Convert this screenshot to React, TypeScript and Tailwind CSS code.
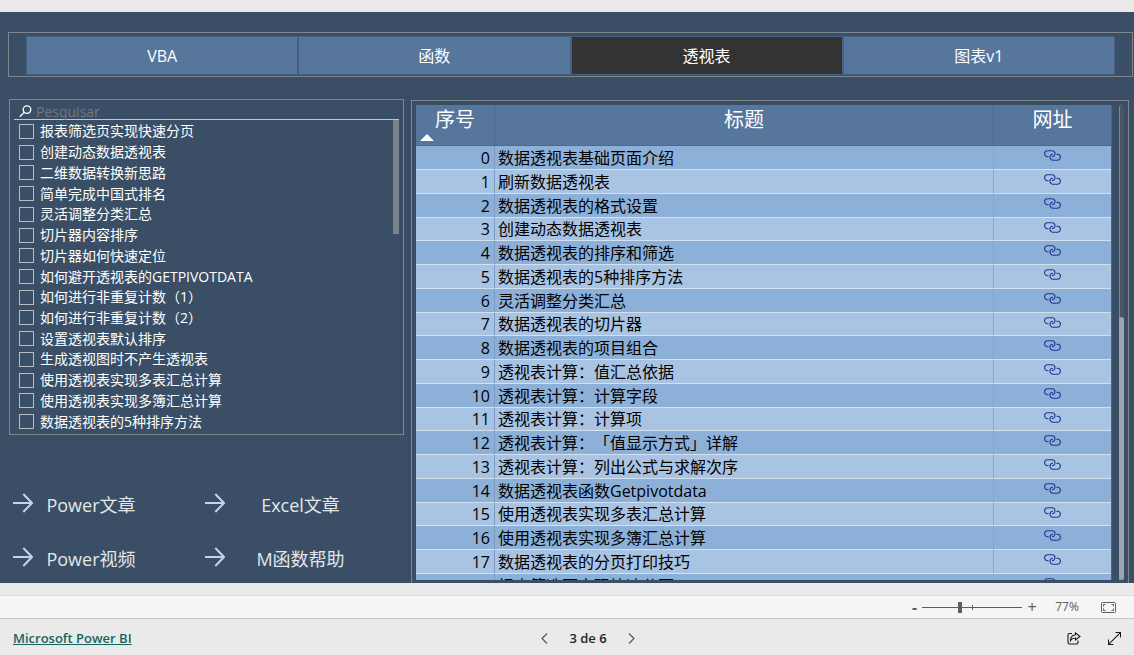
import { useState } from 'react';
import clsx from 'clsx';

const TABS = ['VBA', '函数', '透视表', '图表v1'];

const SLICER_ITEMS = [
  '报表筛选页实现快速分页',
  '创建动态数据透视表',
  '二维数据转换新思路',
  '简单完成中国式排名',
  '灵活调整分类汇总',
  '切片器内容排序',
  '切片器如何快速定位',
  '如何避开透视表的GETPIVOTDATA',
  '如何进行非重复计数（1）',
  '如何进行非重复计数（2）',
  '设置透视表默认排序',
  '生成透视图时不产生透视表',
  '使用透视表实现多表汇总计算',
  '使用透视表实现多簿汇总计算',
  '数据透视表的5种排序方法',
];

const ARTICLES = [
  '数据透视表基础页面介绍',
  '刷新数据透视表',
  '数据透视表的格式设置',
  '创建动态数据透视表',
  '数据透视表的排序和筛选',
  '数据透视表的5种排序方法',
  '灵活调整分类汇总',
  '数据透视表的切片器',
  '数据透视表的项目组合',
  '透视表计算：值汇总依据',
  '透视表计算：计算字段',
  '透视表计算：计算项',
  '透视表计算：「值显示方式」详解',
  '透视表计算：列出公式与求解次序',
  '数据透视表函数Getpivotdata',
  '使用透视表实现多表汇总计算',
  '使用透视表实现多簿汇总计算',
  '数据透视表的分页打印技巧',
  '报表筛选页实现快速分页',
];

const LINKS = ['Power文章', 'Excel文章', 'Power视频', 'M函数帮助'];

function ArrowIcon() {
  return (
    <svg width="20" height="20" viewBox="0 0 20 20" fill="none" stroke="#c3d5ea" strokeWidth="2">
      <path d="M0 10H18.6M10.3 1L19 10L10.3 19" />
    </svg>
  );
}

function LinkIcon() {
  return (
    <svg width="17" height="11" viewBox="0 0 17 11" fill="none" stroke="#1f3491" strokeWidth="1.1">
      <path d="M4.6 6.8H3.6A3 3 0 0 1 3.6 0.8H8A3 3 0 0 1 8 6.8" />
      <path d="M12.4 4.2H13.4A3 3 0 0 1 13.4 10.2H9A3 3 0 0 1 9 4.2" />
    </svg>
  );
}

function TabBar() {
  const [active, setActive] = useState('透视表');

  return (
    <nav className="mr-px ml-2 flex h-[45px] border border-[#80868e] px-[17px] pt-[3px] pb-px">
      {TABS.map((tab) => (
        <button
          key={tab}
          type="button"
          onClick={() => setActive(tab)}
          className={clsx(
            'flex-1 border border-[#446082] text-base text-white',
            tab === active ? 'bg-[#333333]' : 'bg-[#56769c]',
          )}
        >
          {tab}
        </button>
      ))}
    </nav>
  );
}

function Slicer() {
  return (
    <section className="relative flex h-[336px] flex-col border border-[#80868e] px-1 pt-1">
      <label className="flex h-4 items-center gap-1 border-b border-[#c0c6ce] pl-[5px]">
        <svg width="13" height="13" viewBox="0 0 13 13" fill="none" stroke="#fff" strokeWidth="1.3">
          <circle cx="8" cy="4.6" r="3.8" />
          <path d="M5.2 7.4L0.8 11.8" />
        </svg>
        <input
          type="text"
          aria-label="Pesquisar"
          placeholder="Pesquisar"
          className="h-4 min-w-0 flex-1 text-sm leading-4 text-white outline-none placeholder:text-[#74777b]"
        />
      </label>
      <ul className="mb-[2px] flex flex-1 flex-col pt-px">
        {SLICER_ITEMS.map((item) => (
          <li key={item} className="min-h-0 flex-1">
            <label className="flex h-full items-center gap-1.5 pl-[5px] text-sm leading-5 text-white">
              <input
                type="checkbox"
                className="size-[15px] shrink-0 appearance-none border border-[#b9bcc2] checked:bg-white"
              />
              {item}
            </label>
          </li>
        ))}
      </ul>
      <div className="absolute top-5 right-1 h-[114px] w-1.5 bg-[#7b838f]" />
    </section>
  );
}

function ArticleTable() {
  return (
    <section className="mt-px mr-[5px] flex min-w-0 flex-1 gap-[7px] overflow-hidden border border-b-0 border-[#80868e] p-1 pb-[3px]">
      <div className="min-w-0 flex-1 overflow-hidden border-r border-[#4a6484]">
        <table className="w-full table-fixed border-separate border-spacing-0 text-base leading-5 text-black">
          <colgroup>
            <col className="w-[79px]" />
            <col />
            <col className="w-[117px]" />
          </colgroup>
          <thead>
            <tr className="h-[41px] bg-[#56769c] align-top text-xl leading-7 text-white [&>th]:border-[#4c6a90] [&>th]:p-0 [&>th]:pt-px [&>th]:font-normal">
              <th className="relative border-r border-b">
                序号
                <svg className="absolute bottom-1 left-1" width="14" height="7" viewBox="0 0 14 7">
                  <path d="M0 7L7 0L14 7Z" fill="#fff" />
                </svg>
              </th>
              <th className="border-r border-b">标题</th>
              <th className="border-b">网址</th>
            </tr>
          </thead>
          <tbody>
            {ARTICLES.map((title, i) => (
              <tr
                key={title}
                className="h-6 odd:bg-[#8db0d8] even:bg-[#a9c4e3] [&:nth-child(4n)]:h-[23px] [&>td]:border-b [&>td]:border-b-[#d3e0ef] [&>td]:py-0"
              >
                <td className="border-r border-r-[#7c9cc4] pr-1 text-right">{i}</td>
                <td className="truncate border-r border-r-[#8aa8cc] pl-[3px] [text-spacing-trim:space-all]">
                  {title}
                </td>
                <td>
                  <a href="#" aria-label={title} className="flex justify-center pb-1">
                    <LinkIcon />
                  </a>
                </td>
              </tr>
            ))}
          </tbody>
        </table>
      </div>
      <div className="flex w-[5px] flex-col rounded-t-sm border-l border-[#80868e] bg-[#4d5662]">
        <div className="flex-[45]" />
        <div className="-ml-px flex-[56] rounded-full bg-[#9ca3b1]" />
      </div>
    </section>
  );
}

function QuickLinks() {
  return (
    <div className="mt-[41px] grid grid-cols-[192px_1fr] pl-1">
      {LINKS.map((label) => (
        <a
          key={label}
          href="#"
          className="flex h-[54px] items-center text-lg text-[#e4e6e8] odd:pr-14 even:pr-7"
        >
          <ArrowIcon />
          <span className="flex-1 pt-1 text-center">{label}</span>
        </a>
      ))}
    </div>
  );
}

function ZoomBar() {
  return (
    <div className="flex h-6 items-center justify-end border-y border-t-[#dcdcdc] border-b-[#c8c8c8] bg-[#f5f5f5] pr-[18px] text-[#605e5c]">
      <button type="button" aria-label="-" className="w-[10px] text-left text-base leading-5 font-bold">
        -
      </button>
      <div className="relative flex">
        <input
          type="range"
          aria-label="77%"
          defaultValue={38}
          className="h-[11px] w-[100px] appearance-none bg-[linear-gradient(#605e5c,#605e5c)] bg-[length:100%_1px] bg-center bg-no-repeat [&::-webkit-slider-thumb]:h-[11px] [&::-webkit-slider-thumb]:w-1 [&::-webkit-slider-thumb]:appearance-none [&::-webkit-slider-thumb]:bg-[#605e5c]"
        />
        <span className="pointer-events-none absolute top-[3px] left-1/2 h-[5px] w-px bg-[#605e5c]" />
      </div>
      <button type="button" aria-label="+" className="w-5 text-center text-base leading-5">
        +
      </button>
      <span className="w-[50px] text-center text-xs">77%</span>
      <button type="button" aria-label="Ajustar" className="ml-[9px]">
        <svg width="15" height="11" viewBox="0 0 15 11" fill="none" stroke="#605e5c">
          <rect x="0.5" y="0.5" width="14" height="10" rx="1" />
          <path d="M2.5 4.5V2.5H4.5M10.5 2.5H12.5V4.5M12.5 6.5V8.5H10.5M4.5 8.5H2.5V6.5" />
        </svg>
      </button>
    </div>
  );
}

function Footer() {
  return (
    <footer className="grid h-9 grid-cols-[1fr_auto_1fr] items-center bg-[#eaeaea] px-[13px] pt-[3px] text-[13px] font-semibold">
      <a href="#" className="justify-self-start text-[#17655c] underline">
        Microsoft Power BI
      </a>
      <div className="flex items-center gap-[21px] pl-[42px] text-[#252423]">
        <button type="button" aria-label="Anterior">
          <svg width="7" height="11" viewBox="0 0 7 11" fill="none" stroke="#44605c" strokeWidth="1.2">
            <path d="M6 0.5L1 5.5L6 10.5" />
          </svg>
        </button>
        <span>3 de 6</span>
        <button type="button" aria-label="Seguinte">
          <svg width="7" height="11" viewBox="0 0 7 11" fill="none" stroke="#44605c" strokeWidth="1.2">
            <path d="M1 0.5L6 5.5L1 10.5" />
          </svg>
        </button>
      </div>
      <div className="flex items-center gap-[27px] justify-self-end">
        <button type="button" aria-label="Compartilhar">
          <svg width="14" height="13" viewBox="0 0 14 13" fill="none" stroke="#1b1a19" strokeWidth="1.1">
            <path d="M5 1.5H2.5A1.5 1.5 0 0 0 1 3V10.5A1.5 1.5 0 0 0 2.5 12H9.5A1.5 1.5 0 0 0 11 10.5V8.5" />
            <path d="M8.5 0.8L13 4.5L8.5 8V6C6 6 4.6 6.8 3.5 8.5C3.7 5.3 5.3 3 8.5 2.8Z" />
          </svg>
        </button>
        <button type="button" aria-label="Tela inteira">
          <svg width="13" height="13" viewBox="0 0 13 13" fill="none" stroke="#1b1a19" strokeWidth="1.1">
            <path d="M0.8 12.2L12.2 0.8M7.5 0.5H12.5V5.5M0.5 7.5V12.5H5.5" />
          </svg>
        </button>
      </div>
    </footer>
  );
}

export default function App() {
  return (
    <div
      lang="zh-CN"
      className="flex h-screen flex-col bg-[#eaeaea] font-['Open_Sans','Noto_Sans_CJK_SC',sans-serif]"
    >
      <main className="mt-3 mb-3 flex min-h-0 flex-1 flex-col bg-[#3a4f66] pt-5">
        <TabBar />
        <div className="mt-[22px] flex min-h-0 flex-1 gap-[7px] pl-[9px]">
          <div className="w-[395px] shrink-0">
            <Slicer />
            <QuickLinks />
          </div>
          <ArticleTable />
        </div>
      </main>
      <ZoomBar />
      <Footer />
    </div>
  );
}
